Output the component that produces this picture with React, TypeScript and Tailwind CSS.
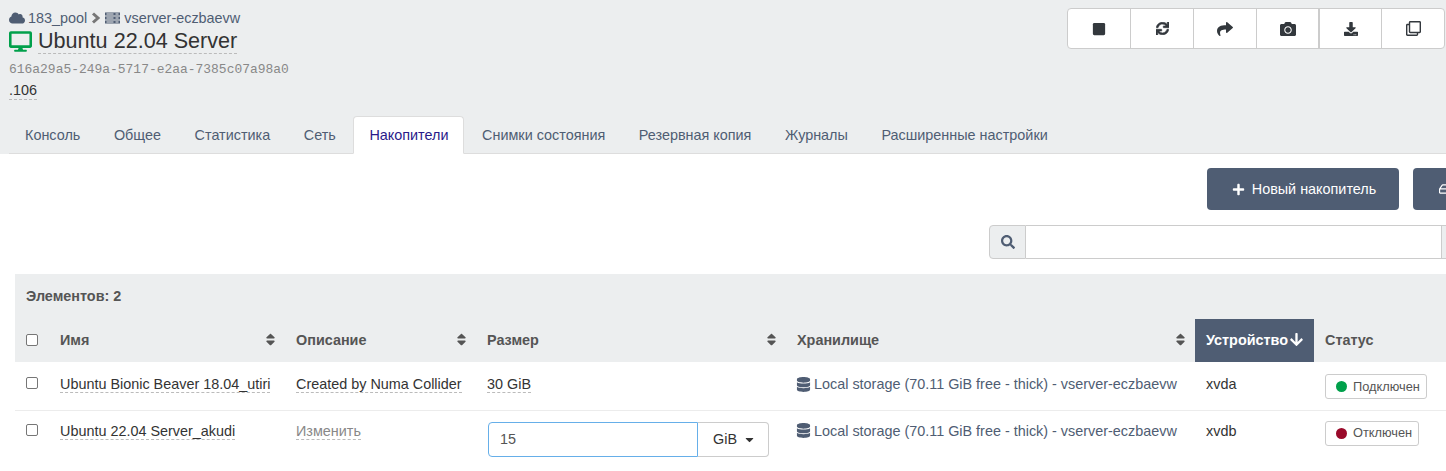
import React from "react";
import { FaCloud, FaDesktop, FaStop, FaSync, FaShare, FaCamera, FaDownload, FaRegClone, FaPlus, FaSearch, FaDatabase, FaSort, FaArrowDown, FaCaretDown, FaRegHdd } from "react-icons/fa";

const dash = "border-b border-dashed border-[#bbb]";

function ServerIcon() {
  return (
    <svg width="15" height="12" viewBox="0 0 15 12" className="mr-[4px]">
      <g fill="#4f5d73">
        <rect x="0" y="0.5" width="15" height="3" />
        <rect x="0" y="4.5" width="15" height="3" />
        <rect x="0" y="8.5" width="15" height="3" />
      </g>
      <g fill="#eceeef">
        <rect x="1.5" y="1.5" width="7" height="1" />
        <rect x="1.5" y="5.5" width="7" height="1" />
        <rect x="1.5" y="9.5" width="7" height="1" />
        <rect x="10.5" y="1.5" width="3" height="1" />
        <rect x="10.5" y="5.5" width="3" height="1" />
        <rect x="10.5" y="9.5" width="3" height="1" />
      </g>
    </svg>
  );
}

function Chevron() {
  return (
    <svg width="10" height="12" viewBox="0 0 10 12" className="mr-[4px]">
      <polyline points="2,1.5 7,6 2,10.5" fill="none" stroke="#777" strokeWidth="3" />
    </svg>
  );
}

function Tool({ children, className }: { children: React.ReactNode; className?: string }) {
  return (
    <div className={`flex h-full items-center justify-center border-l border-[#ccc] first:border-l-0 text-[#33383d] ${className ?? "w-[63px]"}`}>
      {children}
    </div>
  );
}

function Th({ label, w, sort = true }: { label: string; w: number; sort?: boolean }) {
  return (
    <th style={{ width: w }} className="h-[43px] px-[11px] pb-[2px] text-left align-middle font-bold text-[14.4px] text-[#555]">
      <div className="flex items-center justify-between">
        <span>{label}</span>
        {sort && <FaSort className="mr-[-4px] text-[15px] text-[#555]" />}
      </div>
    </th>
  );
}

function Check() {
  return <span className="ml-[11px] block h-[12px] w-[12px] rounded-[2px] border border-[#767676] bg-white" />;
}

function Storage() {
  return (
    <span className="flex items-center text-[#4f5d73]">
      <FaDatabase className="ml-[-1px] mr-[3px] text-[15px]" />
      <span>Local storage (70.11 GiB free - thick) - vserver-eczbaevw</span>
    </span>
  );
}

function Status({ color, label }: { color: string; label: string }) {
  return (
    <span className="inline-flex h-[25px] items-center rounded-[3px] border border-[#ccc] bg-white pl-[10px] pr-[6px] text-[12.8px] text-[#555]">
      <span className={`mr-[6px] h-[11px] w-[11px] rounded-full ${color}`} />
      {label}
    </span>
  );
}

const tabs = ["Консоль", "Общее", "Статистика", "Сеть", "Накопители", "Снимки состояния", "Резервная копия", "Журналы", "Расширенные настройки"];

export default function App() {
  return (
    <div className="h-[471px] w-[1446px] overflow-hidden bg-white text-[14.4px] leading-[20px] text-[#333]" style={{ fontFamily: '"Liberation Sans", Arial, sans-serif' }}>
      <div className="h-[154px] bg-[#eceeef]">
        <div className="flex h-[116px] justify-between pl-[9px] pr-[1px]">
          <div className="pt-[8px]">
            <div className="flex h-[20px] items-center text-[#4f5d73]">
              <FaCloud className="mr-[3px] text-[16px]" />
              <span className="mr-[4px]">183_pool</span>
              <Chevron />
              <ServerIcon />
              <span>vserver-eczbaevw</span>
            </div>
            <div className="flex h-[26px] items-center">
              <FaDesktop className="mr-[6px] text-[23px] text-[#00a04b]" />
              <span className={`${dash} text-[21.6px] leading-[25px] text-[#333]`}>Ubuntu 22.04 Server</span>
            </div>
            <div className="mt-[8px] text-[12.96px] leading-[16px] text-[#888]" style={{ fontFamily: '"Liberation Mono", monospace' }}>
              616a29a5-249a-5717-e2aa-7385c07a98a0
            </div>
            <div className="mt-[4px] flex">
              <span className={`${dash} leading-[17px]`}>.106</span>
            </div>
          </div>
          <div className="mt-[8px] flex h-[41px] w-[378px] items-center overflow-hidden rounded-[4px] border border-[#ccc] bg-white">
            <Tool className="w-[62px]"><FaStop className="text-[14px]" /></Tool>
            <Tool><FaSync className="text-[13px]" stroke="currentColor" strokeWidth={25} /></Tool>
            <Tool><FaShare className="text-[16px]" /></Tool>
            <Tool className="w-[62px]"><FaCamera className="text-[16px]" /></Tool>
            <Tool className="w-[63px] border-l-2"><FaDownload className="text-[14px]" /></Tool>
            <Tool><FaRegClone className="text-[15px]" /></Tool>
          </div>
        </div>
        <div className="ml-[9px] flex h-[38px] gap-[1.6px] border-b border-[#ddd]">
          {tabs.map((t) =>
            t === "Накопители" ? (
              <div key={t} className="z-10 flex h-[38px] items-center rounded-t-[4px] border border-[#ddd] border-b-white bg-white px-[15px] text-[#2a1a8a]">{t}</div>
            ) : (
              <div key={t} className="flex h-[37px] items-center border border-transparent px-[15px] text-[#4f5d73]">{t}</div>
            )
          )}
        </div>
      </div>
      <div className="flex h-[71px] pl-[1207px] pt-[14px]">
        <button className="flex h-[42px] w-[192px] shrink-0 items-center justify-center rounded-[4px] bg-[#4f5d73] pl-[2px] text-white">
          <FaPlus className="mr-[7px] text-[13px]" /> Новый накопитель
        </button>
        <button className="ml-[14px] flex h-[42px] w-[100px] shrink-0 items-center rounded-[4px] bg-[#4f5d73] pl-[26px] text-white">
          <FaRegHdd className="text-[14px]" />
        </button>
      </div>
      <div className="ml-[989px] flex h-[49px] w-[600px] items-start">
        <div className="flex h-[34px] w-[37px] items-center justify-center rounded-l-[4px] border border-[#ccc] bg-[#eceeef]">
          <FaSearch className="text-[14px] text-[#4f5d73]" />
        </div>
        <div className="h-[34px] w-[415px] border-y border-[#ccc] bg-white" />
        <div className="h-[34px] w-[40px] border border-[#ccc] bg-[#eceeef]" />
      </div>
      <div className="ml-[15px] w-[1500px]">
        <div className="flex h-[45px] items-center bg-[#eceeef] pb-[2px] pl-[11px] font-bold text-[#555]">Элементов: 2</div>
        <table className="w-[1500px] table-fixed border-collapse">
          <thead>
            <tr className="bg-[#eceeef]">
              <th style={{ width: 34 }} className="pb-[2px] align-middle"><Check /></th>
              <Th label="Имя" w={236} />
              <Th label="Описание" w={191} />
              <Th label="Размер" w={310} />
              <Th label="Хранилище" w={409} />
              <th style={{ width: 119 }} className="bg-[#4f5d73] px-[11px] pb-[2px] text-left font-bold text-white">
                <div className="flex items-center"><span>Устройство</span><FaArrowDown className="ml-[2px] text-[15px]" /></div>
              </th>
              <Th label="Статус" w={201} sort={false} />
            </tr>
          </thead>
          <tbody>
            <tr className="h-[48px] border-b border-[#ececec] align-top">
              <td className="pt-[15px]"><Check /></td>
              <td className="px-[11px] pt-[12px]"><span className={dash}>Ubuntu Bionic Beaver 18.04_utiri</span></td>
              <td className="px-[11px] pt-[12px]"><span className={dash}>Created by Numa Collider</span></td>
              <td className="px-[11px] pt-[12px]"><span className={dash}>30 GiB</span></td>
              <td className="px-[11px] pt-[12px]"><Storage /></td>
              <td className="px-[11px] pt-[12px]">xvda</td>
              <td className="px-[11px] pt-[12px]"><Status color="bg-[#00a04b]" label="Подключен" /></td>
            </tr>
            <tr className="align-top">
              <td className="pt-[13px]"><Check /></td>
              <td className="px-[11px] pt-[10px]"><span className={dash}>Ubuntu 22.04 Server_akudi</span></td>
              <td className="px-[11px] pt-[10px] text-[#888]"><span className={dash}>Изменить</span></td>
              <td className="px-[11px] pt-[11px]">
                <div className="ml-[1px] flex h-[35px] w-[281px]">
                  <input readOnly value="15" className="h-[35px] w-[210px] rounded-l-[4px] border border-[#66afe9] px-[11px] text-[14.4px] text-[#555] outline-none" />
                  <div className="flex h-[35px] w-[71px] items-center rounded-r-[4px] border border-l-0 border-[#ccc] pl-[15px] text-[#333]">GiB<FaCaretDown className="ml-[6px] text-[13px]" /></div>
                </div>
              </td>
              <td className="px-[11px] pt-[10px]"><Storage /></td>
              <td className="px-[11px] pt-[10px]">xvdb</td>
              <td className="px-[11px] pt-[10px]"><Status color="bg-[#9a0a2a]" label="Отключен" /></td>
            </tr>
          </tbody>
        </table>
      </div>
    </div>
  );
}
